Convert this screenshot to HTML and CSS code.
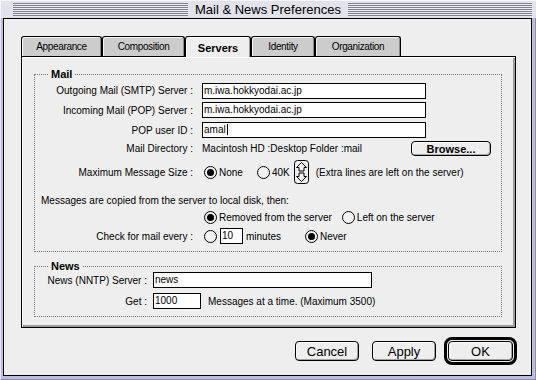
FILE: index.html
```html
<!DOCTYPE html>
<html>
<head>
<meta charset="utf-8">
<link rel="stylesheet" href="styles.css">
</head>
<body>
<div class="window">
  <div class="titlebar">
    <div class="stripes left"></div>
    <div class="title">Mail &amp; News Preferences</div>
    <div class="stripes right"></div>
  </div>
  <div class="content">
    <div class="tabs">
      <div class="tab t1">Appearance</div>
      <div class="tab t2">Composition</div>
      <div class="tab t3 active">Servers</div>
      <div class="tab t4">Identity</div>
      <div class="tab t5">Organization</div>
    </div>
    <div class="panel">
      <div class="group mail">
        <div class="legend">Mail</div>
        <div class="row r1"><span class="label">Outgoing Mail (SMTP) Server :</span><div class="field wide">m.iwa.hokkyodai.ac.jp</div></div>
        <div class="row r2"><span class="label">Incoming Mail (POP) Server :</span><div class="field wide">m.iwa.hokkyodai.ac.jp</div></div>
        <div class="row r3"><span class="label">POP user ID :</span><div class="field wide">amal<span class="caret"></span></div></div>
        <div class="row r4"><span class="label">Mail Directory :</span><span class="path">Macintosh HD :Desktop Folder :mail</span><div class="browse">Browse...</div></div>
        <div class="row r5"><span class="label">Maximum Message Size :</span>
          <div class="opt first"><span class="radio on"></span><span>None</span></div>
          <div class="opt k40"><span class="radio"></span><span>40K</span></div>
          <svg class="stepper" width="15" height="24" viewBox="0 0 15 24"><rect x="0.5" y="0.5" width="14" height="23" rx="3" fill="#eee" stroke="#000"/><path d="M7.5 2.5 L12.5 7.5 L10 7.5 L10 11 L5 11 L5 7.5 L2.5 7.5 Z" fill="none" stroke="#000"/><path d="M7.5 21.5 L12.5 16.5 L10 16.5 L10 13 L5 13 L5 16.5 L2.5 16.5 Z" fill="none" stroke="#000"/></svg>
          <span class="note">(Extra lines are left on the server)</span>
        </div>
        <div class="row r6"><span class="msg">Messages are copied from the server to local disk, then:</span></div>
        <div class="row r7"><span class="label"></span>
          <div class="opt first"><span class="radio on"></span><span>Removed from the server</span></div>
          <div class="opt left"><span class="radio"></span><span>Left on the server</span></div>
        </div>
        <div class="row r8"><span class="label">Check for mail every :</span>
          <span class="radio first"></span>
          <div class="field mins">10</div>
          <span class="minutes">minutes</span>
          <div class="opt never"><span class="radio on"></span><span>Never</span></div>
        </div>
      </div>
      <div class="group news">
        <div class="legend">News</div>
        <div class="row n1"><span class="label">News (NNTP) Server :</span><div class="field nntp">news</div></div>
        <div class="row n2"><span class="label">Get :</span><div class="field get">1000</div><span class="at">Messages at a time. (Maximum 3500)</span></div>
      </div>
    </div>
    <div class="buttons">
      <div class="btn">Cancel</div>
      <div class="btn apply">Apply</div>
      <div class="default"><div class="btn ok">OK</div></div>
    </div>
  </div>
</div>
</body>
</html>
```

FILE: styles.css
```css
html, body {
  margin: 0;
  padding: 0;
}
body {
  font-family: "Liberation Sans", Arial, sans-serif;
  font-size: 10px;
  color: #000;
  background: #fff;
}
.window {
  width: 536px;
  height: 380px;
  box-sizing: border-box;
  background: #bcbcdc;
  box-shadow: inset 1px 1px 0 #e6e6fa, inset -1px -1px 0 #8c8cb0;
  display: flex;
  flex-direction: column;
}
.titlebar {
  height: 18px;
  box-sizing: border-box;
  padding: 3px 4px 0 3px;
  display: flex;
  align-items: flex-start;
  background: #e2e2ea;
  box-shadow: inset 1px 1px 0 #f4f4ff;
}
.stripes {
  height: 13px;
  background: repeating-linear-gradient(to bottom, #808088 0 1px, #ececf2 1px 2px);
}
.stripes.left { width: 175px; flex: none; }
.stripes.right { flex: 1; }
.title {
  font-size: 13px;
  line-height: 13px;
  padding: 0 7px;
  white-space: nowrap;
}
.content {
  flex: 1;
  margin: 0 4px 4px 3px;
  border: 1px solid #000;
  background: #eeeeee;
  padding: 17px 0 0 17px;
  box-sizing: border-box;
}
.tabs {
  display: flex;
  align-items: flex-end;
  height: 20px;
}
.tab {
  position: relative;
  height: 20px;
  box-sizing: border-box;
  border: 1px solid #000;
  border-bottom: none;
  border-radius: 3px 3px 0 0;
  background: #cccccc;
  box-shadow: inset 1px 1px 0 #f4f4f4, inset -1px 0 0 #888;
  display: flex;
  align-items: center;
  justify-content: center;
  font-size: 10px;
  letter-spacing: -0.35px;
  flex: none;
}
.tab.active {
  height: 21px;
  margin-bottom: -1px;
  z-index: 1;
  background: #eeeeee;
  box-shadow: inset 1px 1px 0 #fff, inset -1px 0 0 #999;
  font-weight: bold;
  font-size: 11px;
  letter-spacing: 0;
  padding-top: 1px;
}
.t1 { width: 81px; }
.t2 { width: 83px; }
.t3 { width: 66px; }
.t4 { width: 64px; }
.t5 { width: 86px; }
.panel {
  width: 495px;
  box-sizing: border-box;
  border: 1px solid #000;
  box-shadow: inset 1px 1px 0 #fff, inset -2px -2px 0 #9a9a9a;
  padding: 17px 13px 10px 12px;
}
.group {
  position: relative;
  border: 1px dotted #7a7a7a;
}
.legend {
  position: absolute;
  left: 13px;
  top: -8px;
  padding: 0 3px;
  background: #eeeeee;
  font-weight: bold;
  font-size: 11px;
  line-height: 14px;
}
.row {
  display: flex;
  align-items: center;
  white-space: nowrap;
}
.label {
  flex: none;
  text-align: right;
}
.mail { padding: 6px 0 5px; }
.mail .label { width: 158px; margin-right: 9px; }
.r1 { height: 19px; }
.r2 { height: 20px; }
.r3 { height: 20px; }
.r4 { height: 17px; }
.r5 { height: 30px; }
.r6 { height: 18px; margin-top: 4px; }
.r7 { height: 16px; }
.r8 { height: 20px; margin-top: 1px; }
.field {
  flex: none;
  height: 16px;
  box-sizing: border-box;
  border: 1px solid #000;
  background: #fff;
  padding: 0 1px;
  line-height: 14px;
  font-size: 10px;
  overflow: hidden;
}
.wide { width: 224px; }
.caret {
  display: inline-block;
  width: 1px;
  height: 11px;
  background: #000;
  vertical-align: -2px;
  margin-left: 1px;
}
.browse {
  margin-left: auto;
  margin-right: 10px;
  width: 80px;
  height: 15px;
  box-sizing: border-box;
  border: 1px solid #000;
  border-radius: 4px;
  background: #eeeeee;
  box-shadow: inset 1px 1px 0 #fff, inset -1px -1px 0 #aaa;
  font-weight: bold;
  font-size: 11px;
  display: flex;
  align-items: center;
  justify-content: center;
}
.opt {
  display: flex;
  align-items: center;
  gap: 2px;
  flex: none;
}
.first { margin-left: 2px; }
.radio {
  position: relative;
  flex: none;
  width: 13px;
  height: 13px;
  box-sizing: border-box;
  border: 1px solid #000;
  border-radius: 50%;
  background: #f2f2f2;
}
.radio.on::after {
  content: "";
  position: absolute;
  left: 2px;
  top: 2px;
  width: 7px;
  height: 7px;
  border-radius: 50%;
  background: #000;
}
.k40 { margin-left: 14px; }
.stepper { margin-left: 4px; flex: none; }
.note { margin-left: 7px; }
.msg { margin-left: 6px; }
.left { margin-left: 10px; }
.mins { width: 23px; margin-left: 3px; }
.minutes { margin-left: 3px; }
.never { margin-left: 24px; }
.news {
  margin-top: 14px;
  padding: 3px 0 5px;
}
.news .label { width: 112px; margin-right: 6px; }
.n1 { height: 20px; }
.n2 { height: 20px; margin-top: 1px; }
.nntp { width: 219px; }
.get { width: 48px; }
.at { margin-left: 7px; }
.buttons {
  display: flex;
  justify-content: flex-end;
  align-items: center;
  margin-top: 9px;
  padding-right: 14px;
}
.btn {
  width: 64px;
  height: 20px;
  box-sizing: border-box;
  border: 1px solid #000;
  border-radius: 4px;
  background: #eeeeee;
  box-shadow: inset 1px 1px 0 #fff, inset -1px -1px 0 #a0a0a0;
  font-size: 13px;
  display: flex;
  align-items: center;
  justify-content: center;
}
.apply { margin-left: 13px; }
.default {
  margin-left: 8px;
  border: 3px solid #000;
  border-radius: 8px;
  padding: 1px;
}
.ok { width: 65px; }
```
